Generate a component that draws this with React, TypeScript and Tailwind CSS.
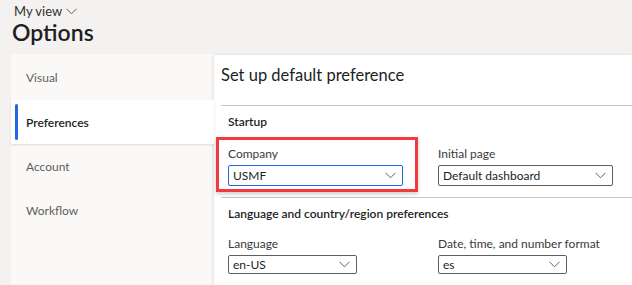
import React from "react";

const font = { fontFamily: 'Lato, "Noto Sans", sans-serif' };

function Chevron({ className = "" }: { className?: string }) {
  return (
    <svg width="11" height="7" viewBox="0 0 11 7" className={className} fill="none">
      <path d="M0.5 0.8 L5.5 5.8 L10.5 0.8" stroke="#605e5c" strokeWidth="1" />
    </svg>
  );
}

function Dropdown({ value, w, h, focused }: { value: string; w: string; h: string; focused?: boolean }) {
  return (
    <div
      className={`${w} ${h} flex items-center justify-between pl-[4px] pr-[6px] bg-white border ${
        focused ? "border-[#2266e3]" : "border-[#605e5c]"
      } rounded-[2px] text-[12px] text-[#201f1e]`}
    >
      <span>{value}</span>
      <Chevron />
    </div>
  );
}

export default function App() {
  return (
    <div className="w-[632px] h-[285px] overflow-hidden bg-[#f3f2f1] text-[#323130]" style={font}>
      <div className="pl-[14px] pt-[2px] h-[54px]">
        <div className="flex items-center gap-[4px] text-[13px] leading-[18px] text-[#323130]">
          <span>My view</span>
          <Chevron />
        </div>
        <div className="text-[23px] leading-[24px] font-semibold text-[#201f1e] -ml-[2px]">Options</div>
      </div>
      <div className="flex">
        <div className="ml-[11px] w-[203px] h-[231px] bg-[#faf9f8] text-[12px] text-[#605e5c]">
          <div className="h-[46px] flex items-center pl-[15px] pt-[2px]">Visual</div>
          <div className="h-[44px] bg-white flex items-center relative shadow-[0_1px_2px_rgba(0,0,0,0.12)] pl-[15px] pt-[2px] text-[#201f1e] font-semibold">
            <div className="absolute left-[4px] top-[4px] bottom-[4px] w-[3px] rounded-[2px] bg-[#2266e3]" />
            Preferences
          </div>
          <div className="h-[44px] flex items-center pl-[15px] pt-[2px]">Account</div>
          <div className="h-[44px] flex items-center pl-[15px] pt-[2px]">Workflow</div>
        </div>
        <div className="mt-px flex-1 bg-white shadow-[-1px_0_3px_rgba(0,0,0,0.10)] h-[230px]">
          <div className="h-[50px] flex items-center pl-[7px] pb-[10px] text-[16.5px] text-[#201f1e]">
            Set up default preference
          </div>
          <div className="ml-[7px] h-px bg-[#c8c6c4]" />
          <div className="pl-[14px]">
            <div className="h-[31px] flex items-center text-[12px] font-semibold text-[#201f1e]">Startup</div>
            <div className="flex gap-[35px] pt-[10px]">
              <div className="relative">
                <div className="absolute -left-[12px] -top-[10px] w-[202px] h-[55px] border-[3px] border-[#f03a3e] shadow-[0_2px_4px_rgba(0,0,0,0.2)]" />
                <div className="text-[12px] leading-[14px] text-[#3b3a39] mb-[4px]">Company</div>
                <Dropdown value="USMF" w="w-[175px]" h="h-[21px]" focused />
              </div>
              <div>
                <div className="text-[12px] leading-[14px] text-[#3b3a39] mb-[4px]">Initial page</div>
                <Dropdown value="Default dashboard" w="w-[175px]" h="h-[21px]" />
              </div>
            </div>
          </div>
          <div className="ml-[7px] mt-[11px] h-px bg-[#c8c6c4]" />
          <div className="pl-[14px]">
            <div className="h-[32px] flex items-center text-[12px] font-semibold text-[#201f1e]">
              Language and country/region preferences
            </div>
            <div className="flex gap-[81px] pt-[7px]">
              <div>
                <div className="text-[12px] leading-[14px] text-[#3b3a39] mb-[4px]">Language</div>
                <Dropdown value="en-US" w="w-[129px]" h="h-[19px]" />
              </div>
              <div>
                <div className="text-[12px] leading-[14px] text-[#3b3a39] mb-[4px]">Date, time, and number format</div>
                <Dropdown value="es" w="w-[129px]" h="h-[19px]" />
              </div>
            </div>
          </div>
        </div>
      </div>
    </div>
  );
}
